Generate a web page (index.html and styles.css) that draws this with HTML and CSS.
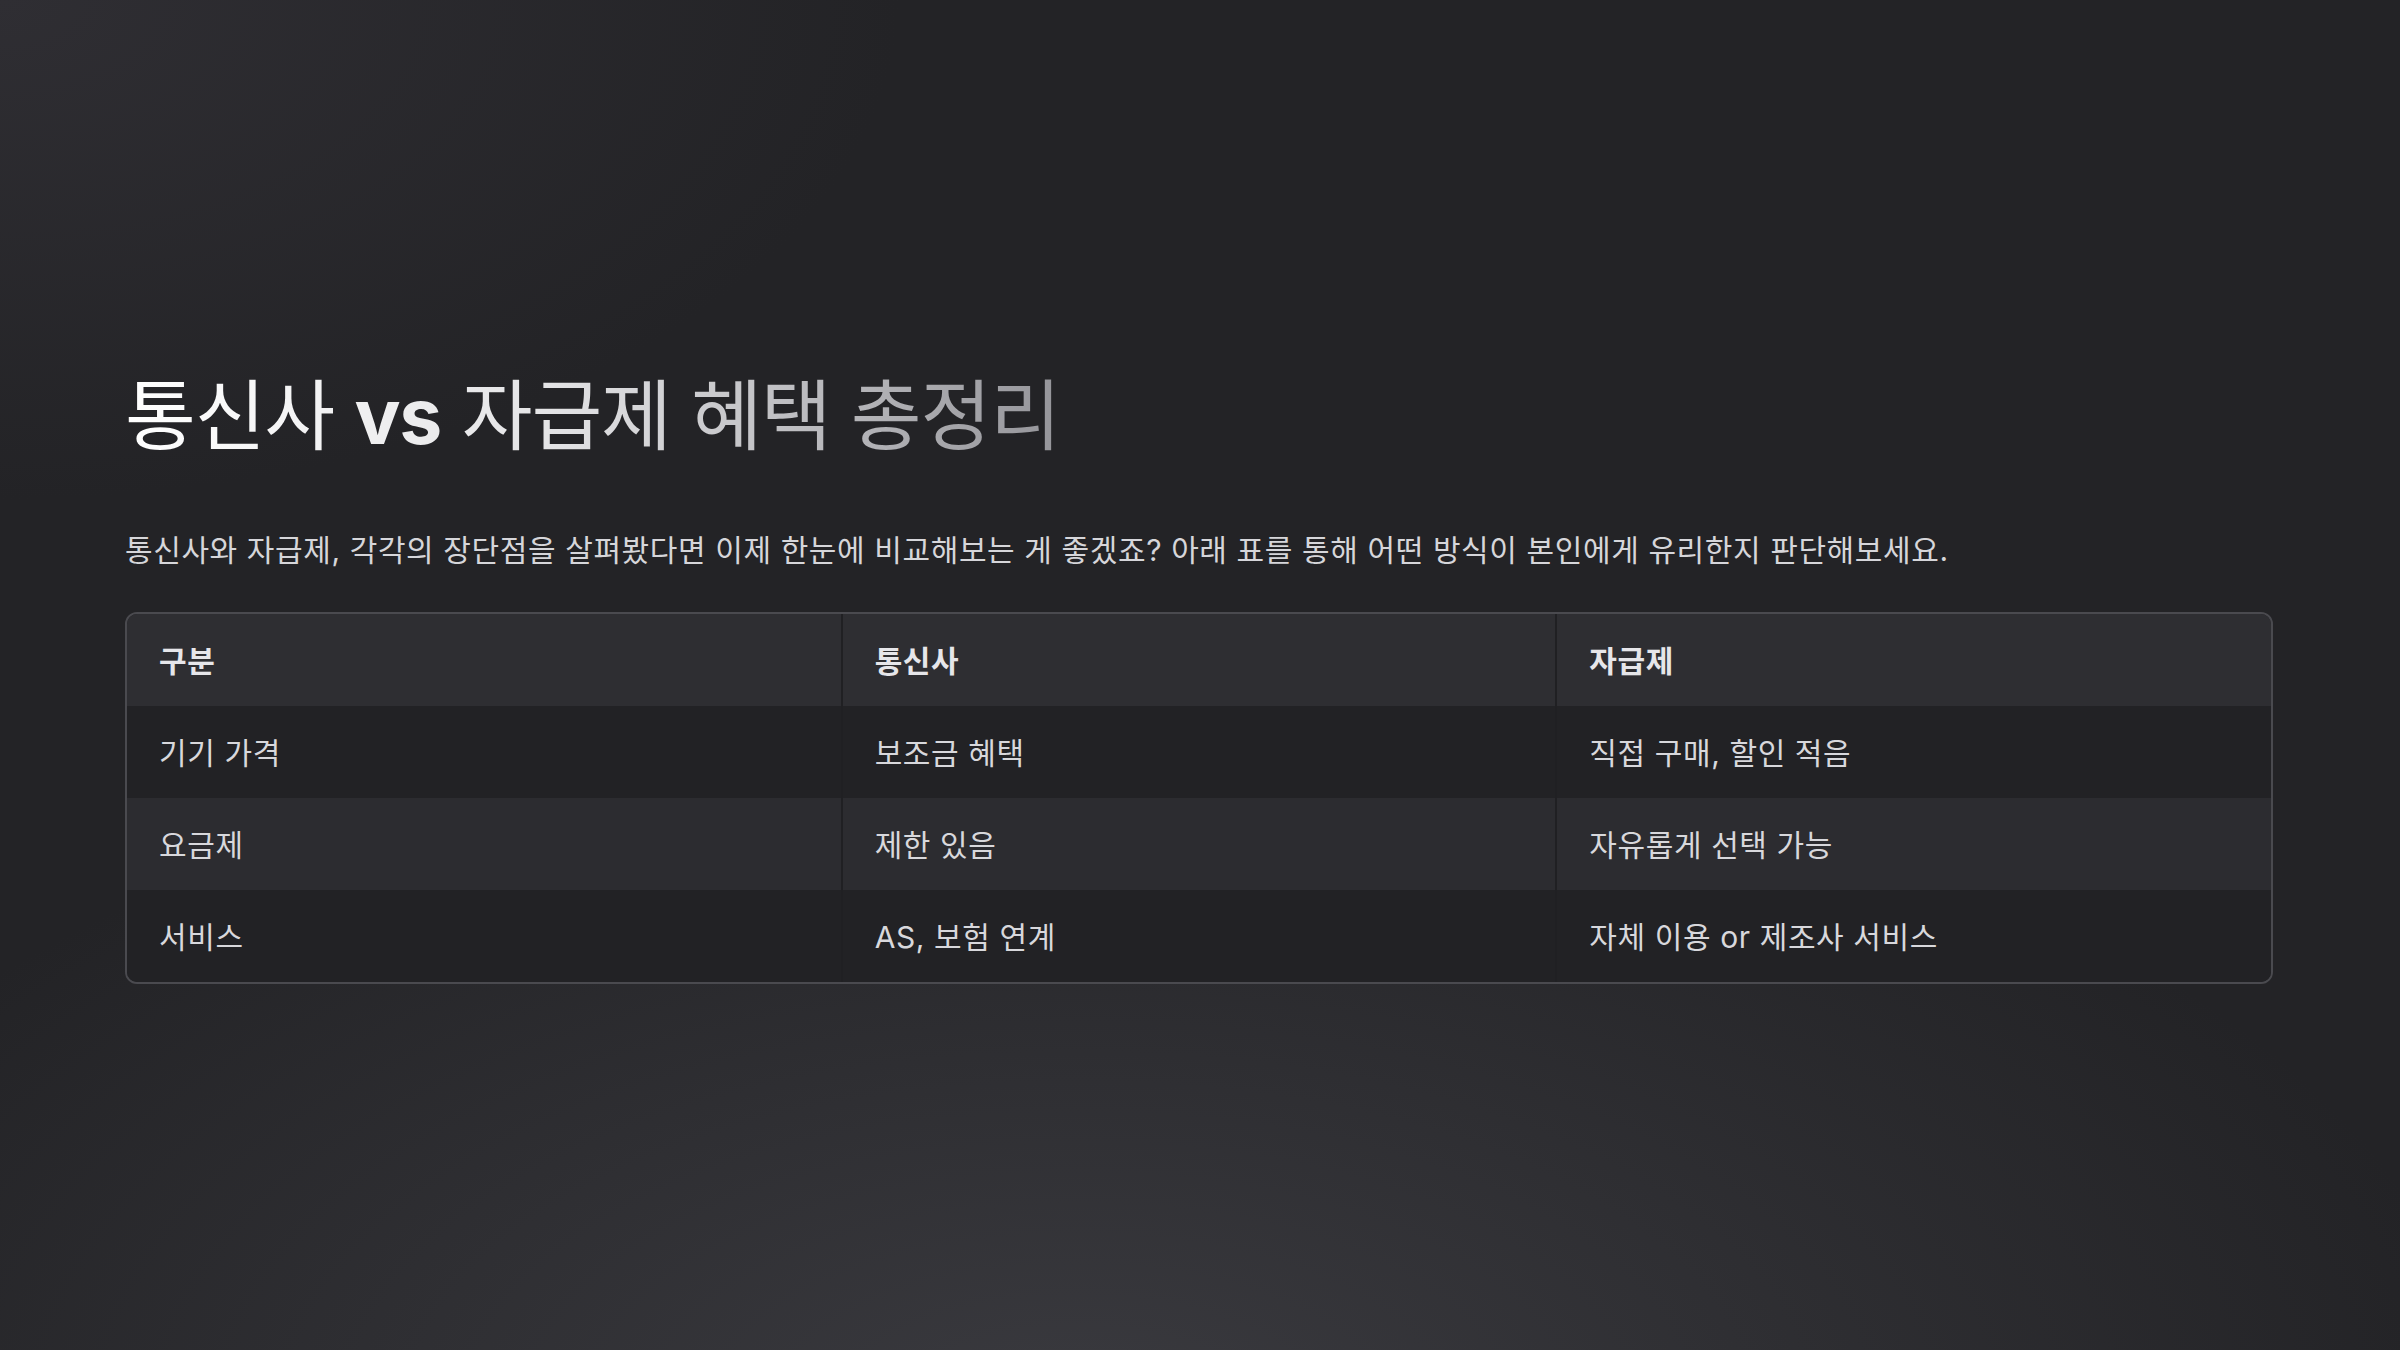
FILE: index.html
```html
<!DOCTYPE html>
<html lang="ko">
<head>
<meta charset="utf-8">
<link rel="stylesheet" href="styles.css">
</head>
<body>
<main class="slide">
  <h1 class="title">통신사 <span class="vs">vs</span> 자급제 혜택 총정리</h1>
  <p class="lead">통신사와 자급제, 각각의 장단점을 살펴봤다면 이제 한눈에 비교해보는 게 좋겠죠? 아래 표를 통해 어떤 방식이 본인에게 유리한지 판단해보세요.</p>
  <div class="table-wrap">
    <table class="cmp">
      <thead>
        <tr><th>구분</th><th>통신사</th><th>자급제</th></tr>
      </thead>
      <tbody>
        <tr><td>기기 가격</td><td>보조금 혜택</td><td>직접 구매, 할인 적음</td></tr>
        <tr><td>요금제</td><td>제한 있음</td><td>자유롭게 선택 가능</td></tr>
        <tr><td>서비스</td><td>AS, 보험 연계</td><td>자체 이용 or 제조사 서비스</td></tr>
      </tbody>
    </table>
  </div>
</main>
</body>
</html>
```

FILE: styles.css
```css
html, body {
  margin: 0;
  padding: 0;
}
body {
  width: 2400px;
  height: 1350px;
  overflow: hidden;
  font-family: "Inter", "Noto Sans CJK KR", sans-serif;
  color: #dcdce0;
  background:
    radial-gradient(ellipse 1400px 700px at 45% 105%, #3a3a3f 0%, rgba(58,58,63,0) 100%),
    radial-gradient(ellipse 900px 500px at 0% 0%, #2f2e33 0%, rgba(47,46,51,0) 100%),
    #232326;
}
.slide {
  box-sizing: border-box;
  padding: 361px 127px 0 125px;
}
.title {
  margin: 0;
  font-size: 77px;
  font-weight: 400;
  line-height: 110px;
  letter-spacing: -1.2px;
  display: inline-block;
  background: linear-gradient(90deg, #ffffff 0%, #e4e4e6 45%, #95959a 100%);
  -webkit-background-clip: text;
  background-clip: text;
  color: transparent;
}
.vs {
  font-weight: 700;
}
.lead {
  margin: 57px 0 0 0;
  font-size: 30px;
  line-height: 44px;
  letter-spacing: 0.6px;
  color: #d6d6da;
}
.table-wrap {
  margin-top: 40px;
  border: 2px solid #4a4a4f;
  border-radius: 12px;
  overflow: hidden;
}
.cmp {
  width: 100%;
  border-collapse: collapse;
  table-layout: fixed;
}
.cmp th, .cmp td {
  box-sizing: border-box;
  height: 92px;
  padding: 2px 32px 0 32px;
  text-align: left;
  font-size: 30px;
  line-height: 40px;
  letter-spacing: 0.6px;
  border-left: 2px solid #202023;
}
.cmp th:first-child, .cmp td:first-child {
  border-left: none;
}
.cmp th {
  background: #2e2e32;
  font-weight: 700;
  color: #e6e6ea;
}
.cmp tbody tr:nth-child(odd) td {
  background: #222225;
}
.cmp tbody tr:nth-child(even) td {
  background: #2c2c30;
}
.cmp td {
  color: #d8d8dc;
  font-weight: 400;
}
```
